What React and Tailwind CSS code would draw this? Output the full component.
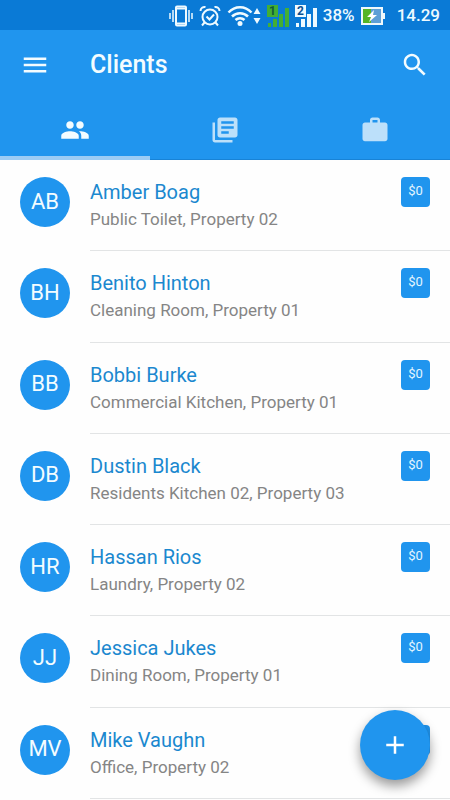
const clients = [
  { initials: 'AB', name: 'Amber Boag', place: 'Public Toilet, Property 02' },
  { initials: 'BH', name: 'Benito Hinton', place: 'Cleaning Room, Property 01' },
  { initials: 'BB', name: 'Bobbi Burke', place: 'Commercial Kitchen, Property 01' },
  { initials: 'DB', name: 'Dustin Black', place: 'Residents Kitchen 02, Property 03' },
  { initials: 'HR', name: 'Hassan Rios', place: 'Laundry, Property 02' },
  { initials: 'JJ', name: 'Jessica Jukes', place: 'Dining Room, Property 01' },
  { initials: 'MV', name: 'Mike Vaughn', place: 'Office, Property 02' },
];

const paths = {
  menu: 'M3 18h18v-2H3v2zm0-5h18v-2H3v2zm0-7v2h18V6H3z',
  search:
    'M15.5 14h-.79l-.28-.27C15.41 12.59 16 11.11 16 9.5 16 5.91 13.09 3 9.5 3S3 5.91 3 9.5 5.91 16 9.5 16c1.61 0 3.09-.59 4.23-1.57l.27.28v.79l5 4.99L20.49 19l-4.99-5zm-6 0C7.01 14 5 11.99 5 9.5S7.01 5 9.5 5 14 7.01 14 9.5 11.99 14 9.5 14z',
  people:
    'M16 11c1.66 0 2.99-1.34 2.99-3S17.66 5 16 5s-3 1.34-3 3 1.34 3 3 3zm-8 0c1.66 0 2.99-1.34 2.99-3S9.66 5 8 5 5 6.34 5 8s1.34 3 3 3zm0 2c-2.33 0-7 1.17-7 3.5V19h14v-2.5C15 14.17 10.33 13 8 13zm8 0c-.29 0-.62.02-.97.05 1.16.84 1.97 1.97 1.97 3.45V19h6v-2.5c0-2.33-4.67-3.5-7-3.5z',
  books:
    'M4 6H2v14c0 1.1.9 2 2 2h14v-2H4V6zm16-4H8c-1.1 0-2 .9-2 2v12c0 1.1.9 2 2 2h12c1.1 0 2-.9 2-2V4c0-1.1-.9-2-2-2zm-1 9H9V9h10v2zm-4 4H9v-2h6v2zm4-8H9V5h10v2z',
  work:
    'M20 6h-4V4c0-1.11-.89-2-2-2h-4c-1.11 0-2 .89-2 2v2H4c-1.11 0-2 .89-2 2v11c0 1.11.89 2 2 2h16c1.11 0 2-.89 2-2V8c0-1.11-.89-2-2-2zm-6 0h-4V4h4v2z',
  add: 'M19 13h-6v6h-2v-6H5v-2h6V5h2v6h6v2z',
};

function Icon({ name }) {
  return (
    <svg viewBox="0 0 24 24" className="size-[30px] fill-current" aria-hidden="true">
      <path d={paths[name]} />
    </svg>
  );
}

function VibrateIcon() {
  return (
    <svg width="24" height="22" viewBox="0 0 24 22" fill="none" stroke="currentColor" strokeWidth="1.5" aria-hidden="true">
      <rect x="7" y="1.5" width="10" height="19" rx="1" strokeWidth="2" />
      <path d="M7 3.5h10M7 18.5h10" strokeWidth="2" />
      <path d="M4 5v12M1 8v6M20 5v12M23 8v6" />
    </svg>
  );
}

function AlarmIcon() {
  return (
    <svg width="22" height="22" viewBox="0 0 22 22" fill="none" stroke="currentColor" strokeWidth="2" aria-hidden="true">
      <circle cx="11" cy="12" r="7.5" />
      <path d="M7.5 11.5l3 3 4.5-5M1.5 6C1.5 3 4 1.5 6.5 2M20.5 6C20.5 3 18 1.5 15.5 2M5.5 17.5l-2.5 3M16.5 17.5l2.5 3" />
    </svg>
  );
}

function WifiIcon() {
  return (
    <svg width="34" height="22" viewBox="0 0 34 22" fill="none" stroke="currentColor" strokeWidth="2.5" aria-hidden="true">
      <path d="M1.5 7.5C8 .5 18 .5 24.5 7.5M5 11.5c4.5-4.5 11.5-4.5 16 0M8.5 15c2.5-2.5 6.5-2.5 9 0" />
      <circle cx="13" cy="18.5" r="2.5" fill="currentColor" stroke="none" />
      <path d="M30 3l3.5 6h-7zM30 19l3.5-6h-7z" fill="currentColor" stroke="none" />
    </svg>
  );
}

function SignalIcon({ sim, digit }) {
  return (
    <svg width="22" height="22" viewBox="0 0 22 22" fill="currentColor" aria-hidden="true">
      <rect width="11" height="12" />
      <rect x="1" y="18" width="3" height="4" />
      <rect x="6" y="14" width="4" height="8" />
      <rect x="12" y="9" width="4" height="13" />
      <rect x="18" y="3" width="4" height="19" />
      <text x="5.5" y="10" textAnchor="middle" className={`text-[12px] font-bold ${digit}`}>
        {sim}
      </text>
    </svg>
  );
}

function BatteryIcon() {
  return (
    <svg width="24" height="18" viewBox="0 0 24 18" aria-hidden="true">
      <rect x="1" y="1" width="20" height="16" fill="#5d9fd6" stroke="#eef8fc" strokeWidth="2" />
      <rect x="2" y="2" width="8" height="14" fill="#55b526" />
      <rect x="22" y="6" width="2" height="6" fill="#eef8fc" />
      <path d="M13 3L6 10h4l-2 5L16 8h-4z" fill="#fff" />
    </svg>
  );
}

function StatusBar() {
  return (
    <div className="flex h-[30px] items-center justify-end bg-[#0a7ad6] pt-0.5 pr-2.5 text-[17px] font-medium text-[#eefaff]">
      <div className="flex items-center gap-1.5">
        <VibrateIcon />
        <AlarmIcon />
        <WifiIcon />
        <span className="text-[#43ae35]">
          <SignalIcon sim="1" digit="fill-[#0f5a3c]" />
        </span>
        <SignalIcon sim="2" digit="fill-[#0b4f8f]" />
        <span>38%</span>
        <BatteryIcon />
      </div>
      <span className="ml-3">14.29</span>
    </div>
  );
}

const tabs = [
  { icon: 'people', label: 'Clients' },
  { icon: 'books', label: 'Properties' },
  { icon: 'work', label: 'Jobs' },
];

function Header() {
  return (
    <header className="bg-[#2095ee] text-[#f3fcff]">
      <StatusBar />
      <div className="flex h-[70px] items-center px-5">
        <button aria-label="Menu">
          <Icon name="menu" />
        </button>
        <h1 className="ml-10 flex-1 text-[25px] font-medium">Clients</h1>
        <button aria-label="Search">
          <Icon name="search" />
        </button>
      </div>
      <nav className="grid h-[60px] grid-cols-3">
        {tabs.map((tab, i) => (
          <button
            key={tab.icon}
            aria-label={tab.label}
            className={
              i === 0
                ? 'flex items-center justify-center border-b-4 border-[#9bccf5] pt-1'
                : 'flex items-center justify-center border-b border-[#1883d6] text-[#bce0fa]'
            }
          >
            <Icon name={tab.icon} />
          </button>
        ))}
      </nav>
    </header>
  );
}

function ClientRow({ client }) {
  return (
    <li className="flex pl-5">
      <div className="mt-[17px] flex size-[50px] shrink-0 items-center justify-center rounded-full bg-[#2095ee] pb-0.5 text-[22px] text-[#f3fcff]">
        {client.initials}
      </div>
      <div className="ml-5 flex min-w-0 flex-1 items-start border-b border-[#e2e4e5] pr-5">
        <div className="min-w-0 flex-1 pt-[18px]">
          <h2 className="text-xl leading-7 text-[#1b88cf]">{client.name}</h2>
          <p className="text-[17px] leading-[26px] text-[#858585]">{client.place}</p>
        </div>
        <span className="mt-[17px] h-[30px] w-[29px] shrink-0 rounded bg-[#2095ee] text-center text-[13px] leading-7 text-[#e3f5ff]">
          $0
        </span>
      </div>
    </li>
  );
}

export default function App() {
  return (
    <div className="flex min-h-screen flex-col bg-[#fefefe] font-['Roboto',sans-serif]">
      <Header />
      <ul className="grid flex-1 auto-rows-fr pb-px">
        {clients.map((client) => (
          <ClientRow key={client.name} client={client} />
        ))}
      </ul>
      <button
        aria-label="Add client"
        className="fixed right-5 bottom-5 flex size-[70px] items-center justify-center rounded-full bg-[#2095ee] text-white shadow-[0_6px_12px_rgba(0,0,0,0.4)]"
      >
        <Icon name="add" />
      </button>
    </div>
  );
}
